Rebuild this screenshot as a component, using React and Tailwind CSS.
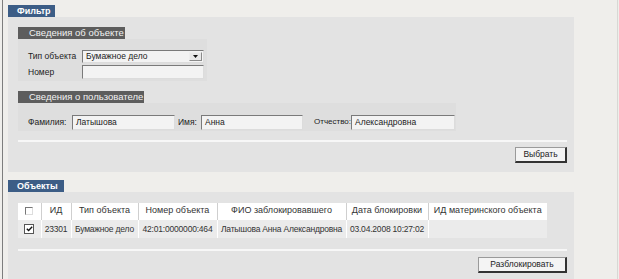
import React from "react";

const font = { fontFamily: '"Liberation Sans", Arial, sans-serif' };

function Sunken({ w, h = 14, value, children }) {
  return (
    <div
      className={`relative flex items-center ${w} bg-[#f3f3f3] border-t border-l border-t-[#7a7a7a] border-l-[#7a7a7a] border-r border-b border-r-[#dcdcdc] border-b-[#dcdcdc] text-[#222] text-[8.5px] leading-none pl-[3px] whitespace-nowrap`}
      style={{ height: h }}
    >
      {value}
      {children}
    </div>
  );
}

function Btn({ label, w }) {
  return (
    <div
      className={`flex items-center justify-center ${w} h-[16px] bg-[#f4f4f4] border border-[#9a9a9a] border-r-[#333] border-b-[#333] border-r-2 border-b-2 text-[8.5px] leading-none text-[#222]`}
    >
      {label}
    </div>
  );
}

function Tab({ label, w }) {
  return (
    <div className={`flex items-center pl-[9px] h-[12px] ${w} bg-[#3c5d86] text-white text-[9px] leading-none font-bold whitespace-nowrap`}>
      {label}
    </div>
  );
}

function SubTab({ label, w }) {
  return (
    <div className={`flex items-center pl-[11px] h-[12px] ${w} bg-[#5d5d5d] text-[#f2f2f2] text-[9.5px] leading-none whitespace-nowrap overflow-hidden`}>
      {label}
    </div>
  );
}

export default function App() {
  const headers = ["", "ИД", "Тип объекта", "Номер объекта", "ФИО заблокировавшего", "Дата блокировки", "ИД материнского объекта"];
  const widths = [23, 30, 67, 79, 129, 82, 119];
  const row = ["", "23301", "Бумажное дело", "42:01:0000000:464", "Латышова Анна Александровна", "03.04.2008 10:27:02", ""];

  return (
    <div className="w-[619px] h-[279px] bg-[#efeeeb] pl-[2px] pr-[1px] overflow-hidden" style={font}>
      <div className="h-full border-l border-l-[#7d7d7d] border-r border-r-[#d8d8d4] pl-[5px] pt-[5px] flex flex-col">
        {/* Filter */}
        <Tab label="Фильтр" w="w-[47px]" />
        <div className="w-[566px] h-[155px] bg-[#e3e3e3] pl-[10px] pt-[10px] flex flex-col">
          <SubTab label="Сведения об объекте" w="w-[107px]" />
          <div className="w-[189px] h-[42px] bg-[#dedede] pl-[10px] pt-[11px] flex flex-col gap-[2px]">
            <div className="flex items-center">
              <span className="w-[54px] text-[8.5px] leading-none text-[#222] whitespace-nowrap">Тип объекта</span>
              <Sunken w="w-[122px]" h={13} value="Бумажное дело">
                <div className="absolute right-[1px] top-[1px] w-[13px] h-[9px] bg-[#e8e8e8] border border-[#8a8a8a] border-t-[#eee] border-l-[#eee] flex items-center justify-center">
                  <svg width="5" height="3" viewBox="0 0 5 3"><path d="M0 0H5L2.5 3Z" fill="#111" /></svg>
                </div>
              </Sunken>
            </div>
            <div className="flex items-center">
              <span className="w-[54px] text-[8.5px] leading-none text-[#222]">Номер</span>
              <Sunken w="w-[122px]" h={14} value="" />
            </div>
          </div>
          <div className="h-[10px]" />
          <SubTab label="Сведения о пользователе" w="w-[126px]" />
          <div className="w-[438px] h-[28px] bg-[#dedede] pl-[10px] pt-[10px] flex items-center">
            <span className="w-[44px] text-[8.5px] leading-none text-[#222] whitespace-nowrap">Фамилия:</span>
            <Sunken w="w-[103px]" h={15} value="Латышова" />
            <span className="w-[26px] pl-[3px] text-[8.5px] leading-none text-[#222] whitespace-nowrap">Имя:</span>
            <Sunken w="w-[102px]" h={15} value="Анна" />
            <span className="w-[48px] pl-[11px] text-[8px] leading-none text-[#222] whitespace-nowrap">Отчество:</span>
            <Sunken w="w-[104px]" h={15} value="Александровна" />
          </div>
          <div className="h-[9px]" />
          <div className="w-[549px] h-[2px] bg-[#f7f7f7]" />
          <div className="w-[549px] flex justify-end pt-[5px]">
            <Btn label="Выбрать" w="w-[52px]" />
          </div>
        </div>

        <div className="h-[8px]" />
        {/* Objects */}
        <Tab label="Объекты" w="w-[56px]" />
        <div className="w-[566px] flex-1 bg-[#e3e3e3] pl-[10px] pt-[11px] flex flex-col">
          <table className="table-fixed w-[529px] border-collapse text-[#333]">
            <colgroup>
              {widths.map((w, i) => (
                <col key={i} style={{ width: w }} />
              ))}
            </colgroup>
            <thead>
              <tr className="h-[16px]">
                {headers.map((h, i) => (
                  <th
                    key={i}
                    className={`bg-white font-normal text-[9px] leading-none text-center p-0 whitespace-nowrap overflow-hidden ${i > 0 ? "border-l border-l-[#cfcfcf]" : ""}`}
                  >
                    {i === 0 ? (
                      <div className="mx-auto w-[8px] h-[8px] border-t border-l border-t-[#777] border-l-[#777] border-r border-b border-r-[#ddd] border-b-[#ddd] bg-white" />
                    ) : (
                      h
                    )}
                  </th>
                ))}
              </tr>
            </thead>
            <tbody>
              <tr className="h-[19px]">
                {row.map((c, i) => (
                  <td
                    key={i}
                    className={`bg-[#ebebeb] text-center text-[8.5px] leading-none p-0 whitespace-nowrap overflow-hidden tracking-[-0.2px] ${i > 0 ? "border-l border-l-white" : ""} border-t border-t-white`}
                  >
                    {i === 0 ? (
                      <div className="mx-auto w-[10px] h-[10px] border border-[#555] bg-white flex items-center justify-center">
                        <svg width="7" height="6" viewBox="0 0 7 6">
                          <path d="M0.8 2.8L2.6 4.6L6.2 0.8" stroke="#111" strokeWidth="1.4" fill="none" />
                        </svg>
                      </div>
                    ) : (
                      c
                    )}
                  </td>
                ))}
              </tr>
            </tbody>
          </table>
          <div className="h-[11px]" />
          <div className="w-[549px] h-[2px] bg-[#f7f7f7]" />
          <div className="w-[549px] flex justify-end pt-[6px]">
            <Btn label="Разблокировать" w="w-[89px]" />
          </div>
        </div>
      </div>
    </div>
  );
}
